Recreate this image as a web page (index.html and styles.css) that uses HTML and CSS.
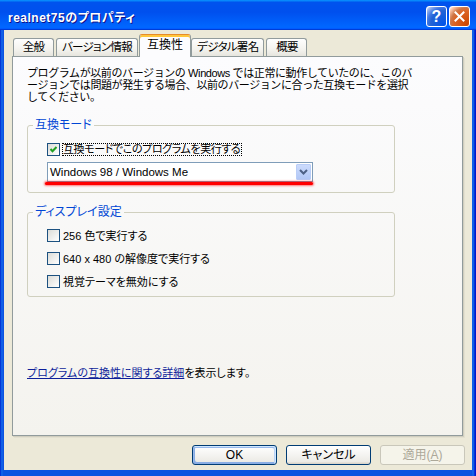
FILE: index.html
```
<!DOCTYPE html>
<html lang="ja">
<head>
<meta charset="utf-8">
<title>realnet75のプロパティ</title>
<link rel="stylesheet" href="styles.css">
</head>
<body>
<div class="window">
  <div class="titlebar">
    <span class="title">realnet75のプロパティ</span>
    <div class="tb-buttons">
      <span class="tb-btn help">?</span>
      <span class="tb-btn close"><svg width="11" height="11" viewBox="0 0 11 11"><path d="M1.5 1.5L9.5 9.5M9.5 1.5L1.5 9.5" stroke="#fff" stroke-width="2" stroke-linecap="square"/></svg></span>
    </div>
  </div>
  <div class="client">
    <div class="tabs">
      <div class="tab">全般</div>
      <div class="tab">バージョン情報</div>
      <div class="tab active">互換性</div>
      <div class="tab">デジタル署名</div>
      <div class="tab">概要</div>
    </div>
    <div class="panel">
      <p class="intro">プログラムが以前のバージョンの Windows では正常に動作していたのに、このバ<br>ージョンでは問題が発生する場合、以前のバージョンに合った互換モードを選択<br>してください。</p>
      <fieldset class="group compat">
        <legend>互換モード</legend>
        <div class="check">
          <span class="box"><svg width="11" height="11" viewBox="0 0 11 11"><path d="M2.5 5L4.5 7.2L8.5 3" fill="none" stroke="#21A121" stroke-width="2"/></svg></span>
          <span class="label focus">互換モードでこのプログラムを実行する</span>
        </div>
        <div class="select">
          <span class="value">Windows 98 / Windows Me</span>
          <span class="arrow"><svg width="9" height="6" viewBox="0 0 9 6"><path d="M1 1L4.5 4.5L8 1" fill="none" stroke="#4D6185" stroke-width="2"/></svg></span>
          <span class="redline"></span>
        </div>
      </fieldset>
      <fieldset class="group display">
        <legend>ディスプレイ設定</legend>
        <div class="check"><span class="box"></span><span class="label">256 色で実行する</span></div>
        <div class="check"><span class="box"></span><span class="label">640 x 480 の解像度で実行する</span></div>
        <div class="check"><span class="box"></span><span class="label">視覚テーマを無効にする</span></div>
      </fieldset>
      <p class="more"><a class="link">プログラムの互換性に関する詳細</a>を表示します。</p>
    </div>
    <div class="buttons">
      <span class="btn default">OK</span>
      <span class="btn">キャンセル</span>
      <span class="btn disabled">適用(<u>A</u>)</span>
    </div>
  </div>
</div>
</body>
</html>
```
FILE: styles.css
```
html, body {
  margin: 0;
  padding: 0;
}
body {
  width: 476px;
  height: 476px;
  overflow: hidden;
  font-family: "Liberation Sans", "Noto Sans CJK JP", sans-serif;
  font-size: 11px;
  font-feature-settings: "palt";
  color: #000;
}
.window {
  width: 476px;
  height: 476px;
  display: flex;
  flex-direction: column;
  background: linear-gradient(to right, #0019CF 0, #0855DD 1px, #166AEE 2px, #0B54E0 3px, #0B54E0 472px, #166AEE 473px, #0855DD 474px, #0019CF 475px);
}
.titlebar {
  height: 30px;
  flex: none;
  box-sizing: border-box;
  padding: 3px 6px 0 8px;
  display: flex;
  align-items: center;
  justify-content: space-between;
  background: linear-gradient(#0997FF 0%, #0053EE 8%, #0050EE 40%, #0066FF 88%, #0066FF 93%, #005BFF 95%, #003DD7 96%, #003DD7 100%);
}
.title {
  color: #fff;
  font-weight: bold;
  font-size: 12px;
  letter-spacing: 0.5px;
  text-shadow: 1px 1px 0 #0F1089;
  white-space: nowrap;
}
.tb-buttons {
  display: flex;
  gap: 2px;
}
.tb-btn {
  width: 21px;
  height: 21px;
  box-sizing: border-box;
  border: 1px solid #fff;
  border-radius: 3px;
  display: flex;
  align-items: center;
  justify-content: center;
  color: #fff;
  font-weight: bold;
  font-size: 16px;
  line-height: 1;
}
.help {
  background: radial-gradient(circle at 90% 90%, #0054E9 0%, #2263D5 55%, #4479E4 70%, #A3BBEC 90%, #fff 100%);
}
.close {
  background: radial-gradient(circle at 90% 90%, #CC4600 0%, #DC6527 55%, #CD7546 68%, #FFCCB2 90%, #fff 100%);
}
.client {
  flex: 1;
  margin: 0 4px 6px 4px;
  background: #ECE9D8;
  padding: 4px 0 0 8px;
  display: flex;
  flex-direction: column;
}
.tabs {
  display: flex;
  align-items: flex-end;
  height: 22px;
  margin-left: 1px;
  position: relative;
  z-index: 1;
}
.tab {
  height: 18px;
  min-width: 41px;
  box-sizing: border-box;
  border: 1px solid #919B9C;
  border-bottom: 0;
  border-radius: 3px 3px 0 0;
  padding: 0 5px;
  text-align: center;
  line-height: 17px;
  background: linear-gradient(#FEFEFE, #F4F3EE 60%, #E6E5DE);
  margin-right: 2px;
  white-space: nowrap;
  font-size: 11.5px;
  letter-spacing: -0.7px;
}
.tab.active {
  height: 23px;
  min-width: 52px;
  margin: 0 0 -1px -1px;
  line-height: 20px;
  border-top: 1px solid #E68B2C;
  box-shadow: inset 0 2px 0 #FFC73C;
  background: #FCFCFE;
  font-size: 12px;
  letter-spacing: 0;
}
.panel {
  width: 451px;
  height: 380px;
  box-sizing: border-box;
  border: 1px solid #919B9C;
  background: linear-gradient(#FCFCFE, #F4F3EE);
  box-shadow: 1px 1px 0 #D0CEBF, 2px 2px 0 #E3E0D0;
  padding: 10px 0 0 14px;
}
.intro {
  margin: 0;
  line-height: 12px;
  white-space: nowrap;
  font-feature-settings: normal;
  letter-spacing: -0.4px;
}
.group {
  margin: 16px 0 0;
  padding: 12px 0 10px 5px;
  border: 1px solid #D0D0BF;
  border-radius: 3px;
  width: 368px;
  box-sizing: border-box;
  min-width: 0;
}
.group legend {
  padding: 0 2px;
  color: #0046D5;
  line-height: 12px;
  font-size: 12px;
}
.group.display {
  margin-top: 13px;
  padding: 11px 0 8px 5px;
}
.check {
  display: flex;
  align-items: center;
  height: 13px;
  margin-left: 14px;
  white-space: nowrap;
}
.display .check + .check {
  margin-top: 10px;
}
.box {
  width: 13px;
  height: 13px;
  box-sizing: border-box;
  border: 1px solid #1C5180;
  background: linear-gradient(135deg, #DCDCD7, #FFFFFF);
  flex: none;
  display: flex;
}
.label {
  margin-left: 3px;
  line-height: 12px;
}
.label.focus {
  margin-left: 2px;
  height: 13px;
  box-sizing: border-box;
  border: 1px dotted #000;
  line-height: 11px;
  padding-right: 1px;
  letter-spacing: -0.4px;
}
.select {
  position: relative;
  margin: 6px 0 0 14px;
  width: 266px;
  height: 20px;
  box-sizing: border-box;
  border: 1px solid #7F9DB9;
  background: #fff;
  display: flex;
  align-items: center;
  justify-content: space-between;
  padding-left: 2px;
}
.value {
  line-height: 12px;
  font-size: 11.5px;
}
.arrow {
  width: 15px;
  height: 16px;
  margin-right: 1px;
  box-sizing: border-box;
  border: 1px solid #B9CDF7;
  border-radius: 1px;
  background: linear-gradient(#CCDBFC, #B1C7F5);
  display: flex;
  align-items: center;
  justify-content: center;
}
.redline {
  position: absolute;
  left: -3px;
  right: -1px;
  bottom: -4px;
  height: 3px;
  border-radius: 2px;
  background: #FF0000;
  box-shadow: 0 0 2px 1px rgba(255, 0, 0, 0.5);
}
.more {
  margin: 70px 0 0;
  line-height: 12px;
  white-space: nowrap;
}
.link {
  color: #0E1F9A;
  text-decoration: underline;
}
.buttons {
  display: flex;
  justify-content: flex-end;
  gap: 9px;
  margin: 9px 7px 0 0;
}
.btn {
  width: 85px;
  height: 20px;
  box-sizing: border-box;
  border: 1px solid #003C74;
  border-radius: 3px;
  background: linear-gradient(180deg, #FFFFFF, #ECEBE6 86%, #D6D0C5);
  line-height: 18px;
  text-align: center;
  white-space: nowrap;
  font-size: 12px;
}
.btn.default {
  box-shadow: inset -1px 1px #CEE7FF, inset 1px 2px #98B8EA, inset -2px 2px #BCD4F6, inset 1px -1px #89ADE4, inset 2px -2px #89ADE4;
}
.btn.disabled {
  border-color: #C9C7BA;
  background: #F5F4EA;
  color: #ACA899;
}
```
